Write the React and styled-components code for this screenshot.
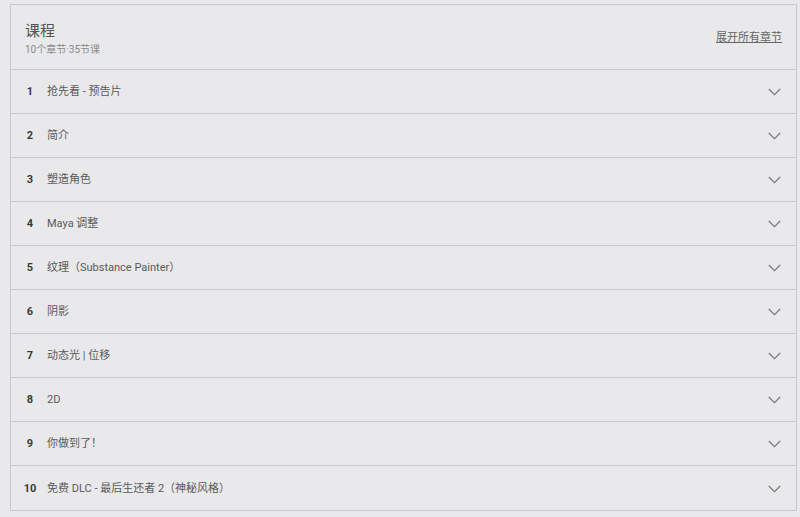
import React from 'react';
import styled, { createGlobalStyle } from 'styled-components';

const GlobalStyle = createGlobalStyle`
  html, body {
    margin: 0;
    padding: 0;
    background: #e9e9eb;
    font-family: Roboto, "Noto Sans CJK SC", sans-serif;
  }
`;

const chapters = [
  '抢先看 - 预告片',
  '简介',
  '塑造角色',
  'Maya 调整',
  '纹理（Substance Painter）',
  '阴影',
  '动态光 | 位移',
  '2D',
  '你做到了！',
  '免费 DLC - 最后生还者 2（神秘风格）',
];

const Panel = styled.section`
  margin: 4px 3px 0 10px;
  border: 1px solid #c9c9cb;
  background: #e9e9eb;
`;

const Header = styled.div`
  height: 64px;
  display: flex;
  align-items: center;
  justify-content: space-between;
  padding: 0 14px 0 14px;
  border-bottom: 1px solid #c9c9cb;
`;

const HeadText = styled.div`
  display: flex;
  flex-direction: column;
  gap: 2px;
  margin-top: 2px;
`;

const Title = styled.h2`
  margin: 0;
  font-size: 15px;
  font-weight: 400;
  color: #555;
  line-height: 20px;
`;

const Sub = styled.div`
  font-size: 10px;
  color: #8a8a8a;
  line-height: 13px;
`;

const ExpandLink = styled.a`
  font-size: 11px;
  color: #666;
  text-decoration: underline;
  cursor: pointer;
  margin-top: -2px;
`;

const Row = styled.div`
  display: flex;
  align-items: center;
  padding: 1px 15px 0 8px;
  box-sizing: border-box;
  height: 44px;
  border-bottom: 1px solid #c9c9cb;
  &:last-child {
    border-bottom: none;
  }
`;

const Num = styled.span`
  width: 22px;
  text-align: center;
  font-size: 11px;
  line-height: 16px;
  font-weight: 700;
  color: #3a3a3a;
  margin-right: 6px;
`;

const Name = styled.span`
  flex: 1;
  font-size: 11px;
  line-height: 16px;
  color: #5a5a5a;
`;

const Chevron = () => (
  <svg width="13" height="8" viewBox="0 0 13 8" fill="none">
    <path d="M0.8 1L6.5 6.6L12.2 1" stroke="#7a7a7a" strokeWidth="1.3" />
  </svg>
);

const App = () => (
  <>
    <GlobalStyle />
    <Panel>
      <Header>
        <HeadText>
          <Title>课程</Title>
          <Sub>10个章节·35节课</Sub>
        </HeadText>
        <ExpandLink>展开所有章节</ExpandLink>
      </Header>
      {chapters.map((c, i) => (
        <Row key={i}>
          <Num>{i + 1}</Num>
          <Name>{c}</Name>
          <Chevron />
        </Row>
      ))}
    </Panel>
  </>
);

export default App;
